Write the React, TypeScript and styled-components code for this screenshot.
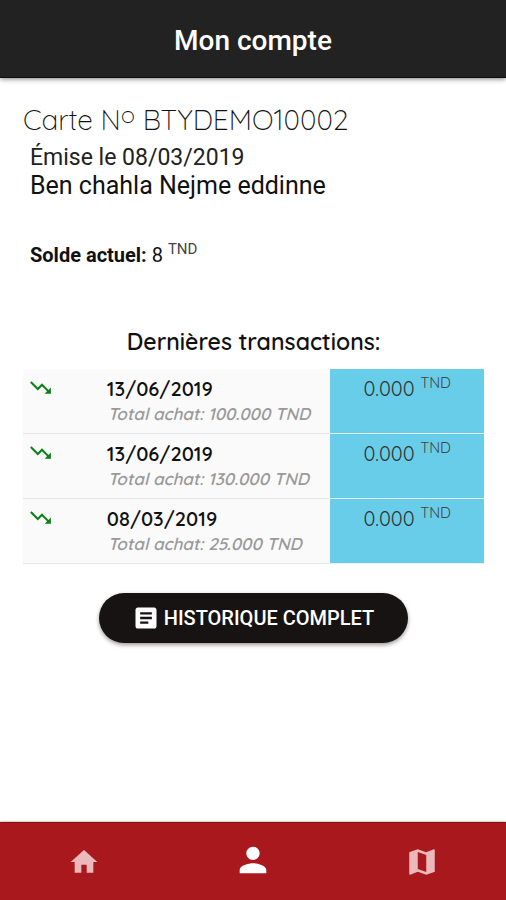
import React from 'react';
import styled, { createGlobalStyle } from 'styled-components';

const rounded = 'Quicksand, Lato, sans-serif';

const GlobalStyle = createGlobalStyle`
  * { box-sizing: border-box; }
  body {
    margin: 0;
    background: #fff;
    color: #111;
    font-family: Roboto, sans-serif;
  }
`;

const Screen = styled.div`
  display: flex;
  flex-direction: column;
  min-height: 100vh;
`;

const Header = styled.header`
  display: flex;
  align-items: center;
  justify-content: center;
  padding: 25px 0 20px;
  background: #222;
  border-bottom: 1px solid #0c0c0c;
  box-shadow: 0 1px 5px rgba(0, 0, 0, 0.5);
`;

const Title = styled.h1`
  margin: 0;
  color: #fff;
  font-size: 28px;
  font-weight: 500;
  line-height: 32px;
`;

const Content = styled.main`
  flex: 1;
  display: flex;
  flex-direction: column;
  padding: 26px 22px 24px 23px;
`;

const CardNumber = styled.h2`
  margin: 0;
  font-family: ${rounded};
  font-size: 28px;
  font-weight: 300;
  line-height: 32px;
  sup {
    font-size: 24px;
    line-height: 0;
    vertical-align: 7px;
  }
`;

const Details = styled.div`
  padding: 8px 7px 0;
`;

const Issued = styled.p`
  margin: 0;
  font-size: 23px;
  line-height: 28px;
  color: #222;
`;

const Holder = styled.p`
  margin: 0;
  font-size: 25px;
  line-height: 28px;
`;

const Balance = styled.p`
  margin: 43px 0 0;
  font-size: 20px;
  line-height: 24px;
  strong { font-weight: 700; }
`;

const Currency = styled.sup`
  font-size: 15px;
  line-height: 0;
  color: #444;
`;

const SectionTitle = styled.h3`
  margin: 61px 0 13px;
  font-family: ${rounded};
  font-size: 23px;
  font-weight: 600;
  line-height: 28px;
  text-align: center;
`;

const Transactions = styled.table`
  width: 100%;
  table-layout: fixed;
  border-collapse: collapse;
  font-family: ${rounded};
`;

const Cell = styled.td<{ $share: number }>`
  width: calc(100% * ${(p) => p.$share} / 6);
  padding: 6px 7px 7px;
  vertical-align: top;
  background: #fafafa;
  border-bottom: 1px solid #e6e6e6;
`;

const AmountCell = styled(Cell)`
  background: #68cde8;
  border-bottom-color: #e4f4f9;
  color: #333;
  font-size: 20px;
  font-weight: 400;
  line-height: 28px;
  text-align: center;
`;

const DateText = styled.div`
  font-size: 20px;
  font-weight: 600;
  line-height: 27px;
`;

const Total = styled.div`
  padding-left: 1px;
  color: #999;
  font-size: 17px;
  font-weight: 600;
  font-style: italic;
  line-height: 24px;
  white-space: nowrap;
`;

const HistoryButton = styled.button`
  display: flex;
  align-items: center;
  align-self: center;
  gap: 4px;
  margin-top: 29px;
  padding: 0 34px 0 33px;
  height: 50px;
  border: 0;
  border-radius: 25px;
  background: #161312;
  color: #fff;
  font: 500 20px Roboto, sans-serif;
  box-shadow: 0 2px 4px rgba(0, 0, 0, 0.4);
`;

const TabBar = styled.nav`
  display: flex;
  height: 78px;
  background: #a8181c;
  border-top: 1px solid #8c1015;
  box-shadow: 0 0 2px rgba(0, 0, 0, 0.5);
`;

const Tab = styled.a<{ $active?: boolean }>`
  flex: 1;
  display: flex;
  justify-content: center;
  align-items: center;
  padding-bottom: ${(p) => (p.$active ? '4px' : '0')};
  color: ${(p) => (p.$active ? '#fff' : '#ebb9bc')};
`;

const Glyph = styled.svg<{ $size: number }>`
  display: block;
  flex: none;
  width: ${(p) => p.$size}px;
  height: ${(p) => p.$size}px;
  fill: currentColor;
`;

const TrendGlyph = styled(Glyph)`
  margin-left: -2px;
  color: #0c8018;
`;

const transactions = [
  { date: '13/06/2019', total: '100.000', amount: '0.000' },
  { date: '13/06/2019', total: '130.000', amount: '0.000' },
  { date: '08/03/2019', total: '25.000', amount: '0.000' },
];

const tabs = [
  { label: 'Accueil', size: 32, path: 'M10 20v-6h4v6h5v-8h3L12 3 2 12h3v8z' },
  {
    label: 'Mon compte',
    size: 40,
    active: true,
    path: 'M12 12c2.21 0 4-1.79 4-4s-1.79-4-4-4-4 1.79-4 4 1.79 4 4 4zm0 2c-2.67 0-8 1.34-8 4v2h16v-2c0-2.66-5.33-4-8-4z',
  },
  {
    label: 'Carte',
    size: 34,
    path: 'M20.5 3l-.16.03L15 5.1 9 3 3.36 4.9c-.21.07-.36.25-.36.48V20.5c0 .28.22.5.5.5l.16-.03L9 18.9l6 2.1 5.64-1.9c.21-.07.36-.25.36-.48V3.5c0-.28-.22-.5-.5-.5zM15 19l-6-2.11V5l6 2.11V19z',
  },
];

export default function App() {
  return (
    <Screen>
      <GlobalStyle />
      <Header>
        <Title>Mon compte</Title>
      </Header>
      <Content>
        <CardNumber>
          Carte N<sup>o</sup> BTYDEMO10002
        </CardNumber>
        <Details>
          <Issued>Émise le 08/03/2019</Issued>
          <Holder>Ben chahla Nejme eddinne</Holder>
          <Balance>
            <strong>Solde actuel:</strong> 8 <Currency>TND</Currency>
          </Balance>
        </Details>
        <SectionTitle>Dernières transactions:</SectionTitle>
        <Transactions>
          <tbody>
            {transactions.map((t, i) => (
              <tr key={i}>
                <Cell $share={1}>
                  <TrendGlyph $size={25} viewBox="0 0 24 24" aria-hidden="true">
                    <path d="M16 18l2.29-2.29-4.88-4.88-4 4L2 7.41 3.41 6l6 6 4-4 6.3 6.29L22 12v6z" />
                  </TrendGlyph>
                </Cell>
                <Cell $share={3}>
                  <DateText>{t.date}</DateText>
                  <Total>Total achat: {t.total} TND</Total>
                </Cell>
                <AmountCell $share={2}>
                  {t.amount} <Currency>TND</Currency>
                </AmountCell>
              </tr>
            ))}
          </tbody>
        </Transactions>
        <HistoryButton type="button">
          <Glyph $size={28} viewBox="0 0 24 24" aria-hidden="true">
            <path d="M19 3H5c-1.1 0-2 .9-2 2v14c0 1.1.9 2 2 2h14c1.1 0 2-.9 2-2V5c0-1.1-.9-2-2-2zm-5 14H7v-2h7v2zm3-4H7v-2h10v2zm0-4H7V7h10v2z" />
          </Glyph>
          HISTORIQUE COMPLET
        </HistoryButton>
      </Content>
      <TabBar>
        {tabs.map((tab) => (
          <Tab key={tab.label} href="#" aria-label={tab.label} $active={tab.active}>
            <Glyph $size={tab.size} viewBox="0 0 24 24" aria-hidden="true">
              <path d={tab.path} />
            </Glyph>
          </Tab>
        ))}
      </TabBar>
    </Screen>
  );
}
